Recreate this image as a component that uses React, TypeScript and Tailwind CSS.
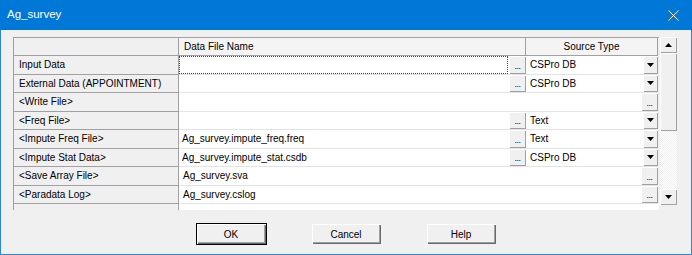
import React from "react";

interface GridRow {
  label: string;
  file: string;
  source?: string;
  focused?: boolean;
}

const rows: GridRow[] = [
  { label: "Input Data", file: "", source: "CSPro DB", focused: true },
  { label: "External Data (APPOINTMENT)", file: "", source: "CSPro DB" },
  { label: "<Write File>", file: "" },
  { label: "<Freq File>", file: "", source: "Text" },
  { label: "<Impute Freq File>", file: "Ag_survey.impute_freq.freq", source: "Text" },
  { label: "<Impute Stat Data>", file: "Ag_survey.impute_stat.csdb", source: "CSPro DB" },
  { label: "<Save Array File>", file: "Ag_survey.sva" },
  { label: "<Paradata Log>", file: "Ag_survey.cslog" },
];

const bevel =
  "bg-[#f0f0f0] shadow-[inset_1px_1px_#ffffff,inset_-1px_-1px_#a0a0a0]";

const DotsButton: React.FC = () => (
  <div className={`w-[17px] h-full shrink-0 flex items-end justify-center pb-[3px] ${bevel}`}>
    <span className="text-[9px] leading-none tracking-[-0.5px] text-black">...</span>
  </div>
);

const Arrow: React.FC<{ up?: boolean }> = ({ up }) => (
  <svg width="7" height="4" viewBox="0 0 7 4">
    {up ? <polygon points="0,4 7,4 3.5,0" fill="#000" /> : <polygon points="0,0 7,0 3.5,4" fill="#000" />}
  </svg>
);

const DropButton: React.FC = () => (
  <div className={`w-[15px] h-full shrink-0 flex items-center justify-center ${bevel}`}>
    <Arrow />
  </div>
);

const ActionButton: React.FC<{ label: string; isDefault?: boolean }> = ({ label, isDefault }) => (
  <button
    className={`w-[71px] h-[22px] text-[10px] text-black bg-[#f0f0f0] border ${
      isDefault ? "border-[#000]" : "border-[#f0f0f0]"
    } shadow-[inset_1px_1px_#ffffff,inset_-1px_-1px_#696969,inset_-2px_-2px_#a0a0a0]`}
  >
    {label}
  </button>
);

export default function App() {
  return (
    <div className="w-[692px] h-[255px] flex flex-col font-['Liberation_Sans',Arial,sans-serif] text-black">
      <div className="h-[30px] shrink-0 bg-[#0078d7] flex items-center justify-between pl-[7px] pr-[13px]">
        <span className="text-[11.5px] text-white">Ag_survey</span>
        <svg width="11" height="11" viewBox="0 0 11 11">
          <path d="M0.5 0.5 L10.5 10.5 M10.5 0.5 L0.5 10.5" stroke="#fff" strokeWidth="1" />
        </svg>
      </div>

      <div className="flex-1 bg-[#f0f0f0] border-x border-b border-[#2b88d8] pl-[12px] pt-[7px]">
        <div className="flex">
          <div className="w-[646px] border-l border-t border-[#a0a0a0]">
            <div className="flex h-[18px] text-[10px]">
              <div className="w-[165px] bg-[#f0f0f0] border-r border-b border-[#a0a0a0]" />
              <div className="w-[347px] bg-[#f4f4f4] border-r border-b border-[#a0a0a0] flex items-center pl-[5px]">
                Data File Name
              </div>
              <div className="w-[132px] bg-[#f4f4f4] border-r border-b border-[#a0a0a0] flex items-center justify-center">
                Source Type
              </div>
            </div>

            {rows.map((row) => (
              <div key={row.label} className="flex h-[18.5px] text-[10px]">
                <div className="w-[165px] shrink-0 bg-[#f0f0f0] border-r border-b border-[#a0a0a0] flex items-center pl-[5px] whitespace-nowrap">
                  {row.label}
                </div>
                {row.source ? (
                  <>
                    <div className="w-[329px] bg-white border-b border-[#e3e3e3] flex">
                      <div
                        className={`flex-1 flex items-center pl-[3px] ${
                          row.focused ? "border border-dotted border-[#444]" : ""
                        }`}
                      >
                        {row.file}
                      </div>
                    </div>
                    <div className="w-[18px] bg-white border-b border-[#e3e3e3] flex justify-end">
                      <DotsButton />
                    </div>
                    <div className="w-[132px] bg-white border-b border-[#e3e3e3] flex pl-[1px]">
                      <div className="flex-1 flex items-center pl-[3px]">{row.source}</div>
                      <DropButton />
                    </div>
                  </>
                ) : (
                  <div className="w-[479px] bg-white border-b border-[#e3e3e3] flex">
                    <div className="flex-1 flex items-center pl-[4px]">{row.file}</div>
                    <DotsButton />
                  </div>
                )}
              </div>
            ))}

            <div className="flex h-[6px]">
              <div className="w-[165px] bg-[#f0f0f0] border-r border-[#a0a0a0]" />
              <div className="flex-1 bg-white" />
            </div>
          </div>

          <div className="w-[17px] h-[168px] flex flex-col ml-[1px]">
            <div className={`h-[16px] shrink-0 flex items-center justify-center ${bevel}`}>
              <Arrow up />
            </div>
            <div className={`h-[78px] shrink-0 ${bevel}`} />
            <div className="flex-1 bg-[repeating-conic-gradient(#f0f0f0_0_25%,#ffffff_0_50%)] bg-[length:2px_2px]" />
            <div className={`h-[16px] shrink-0 flex items-center justify-center ${bevel}`}>
              <Arrow />
            </div>
          </div>
        </div>

        <div className="flex justify-center gap-[44px] mt-[13px] pr-[12px]">
          <ActionButton label="OK" isDefault />
          <ActionButton label="Cancel" />
          <ActionButton label="Help" />
        </div>
      </div>
    </div>
  );
}
